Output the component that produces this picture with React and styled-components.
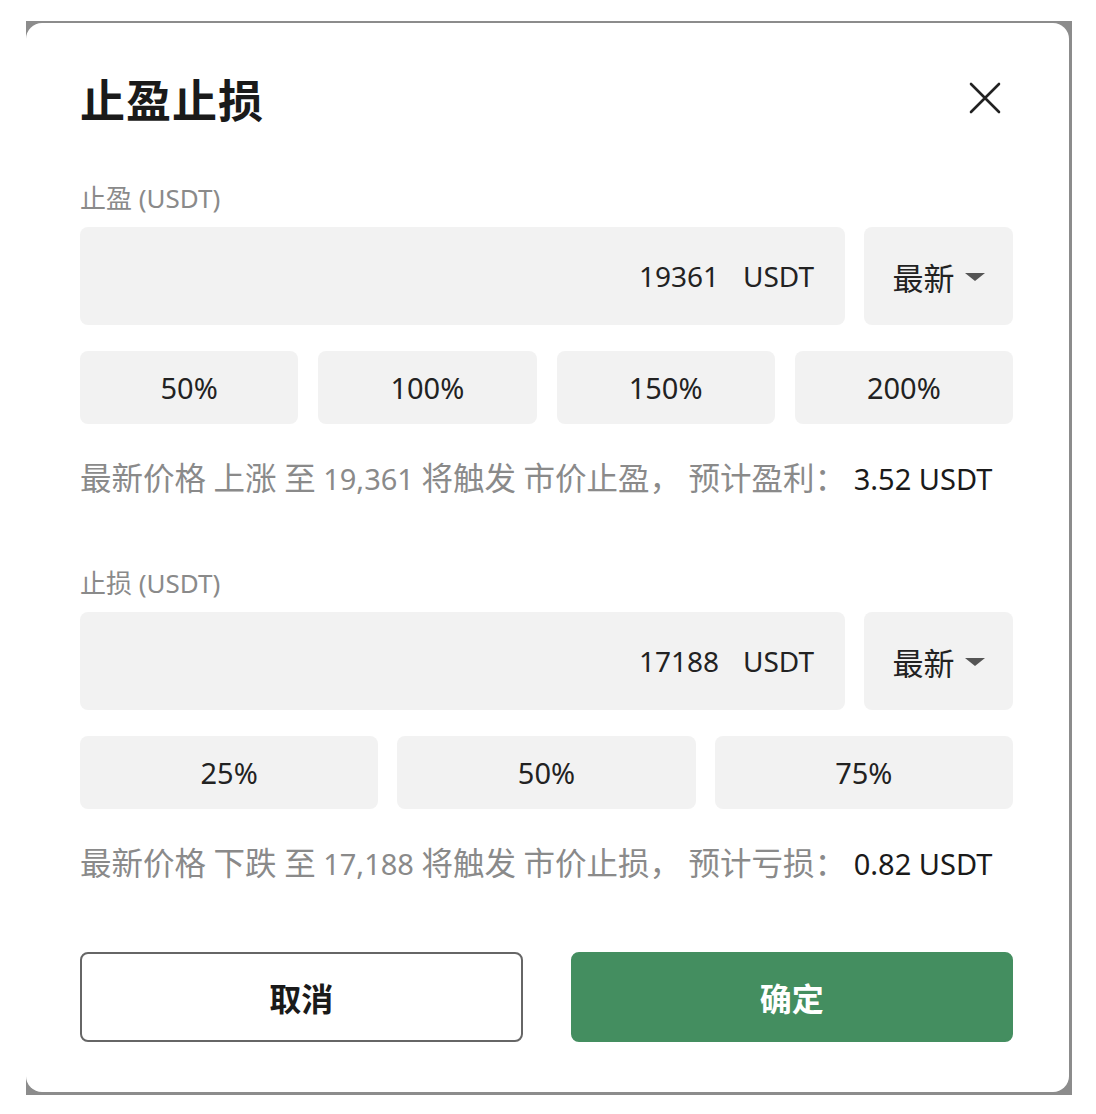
import React from "react";
import styled, { createGlobalStyle } from "styled-components";

const GlobalStyle = createGlobalStyle`
  body {
    margin: 0;
    background: #ffffff;
    font-family: "Noto Sans", "Noto Sans CJK SC", sans-serif;
  }
`;

const Backdrop = styled.div`
  margin: 21px 0 0 26px;
  width: 1046px;
  padding: 2px 3px 3px 0;
  box-sizing: border-box;
  background: #8c8c8c;
`;

const Modal = styled.div`
  background: #ffffff;
  border-radius: 16px;
  padding: 50px 56px 50px 54px;
  display: flex;
  flex-direction: column;
`;

const Header = styled.div`
  height: 50px;
  display: flex;
  align-items: center;
  justify-content: space-between;
  margin-bottom: 60px;
`;

const Title = styled.h1`
  margin: 0;
  font-size: 45px;
  font-weight: 700;
  color: #1a1a1a;
  letter-spacing: 1px;
`;

const CloseButton = styled.button`
  border: 0;
  background: none;
  padding: 0;
  margin-right: 12px;
  width: 32px;
  height: 32px;
  display: flex;
  cursor: pointer;
`;

const Label = styled.div`
  font-size: 26px;
  line-height: 30px;
  color: #8a8a8a;
  margin-bottom: 14px;
`;

const InputRow = styled.div`
  display: flex;
  gap: 19px;
  margin-bottom: 26px;
`;

const PriceField = styled.div`
  flex: 1;
  height: 98px;
  border-radius: 8px;
  background: #f2f2f2;
  display: flex;
  align-items: center;
  justify-content: flex-end;
  padding-right: 31px;
  font-size: 28px;
  color: #222222;
`;

const Unit = styled.span`
  margin-left: 24px;
`;

const Select = styled.div`
  width: 149px;
  height: 98px;
  border-radius: 8px;
  background: #f2f2f2;
  display: flex;
  align-items: center;
  justify-content: center;
  gap: 10px;
  font-size: 31px;
  color: #222222;
`;

const Caret = styled.span`
  width: 0;
  height: 0;
  border-left: 10px solid transparent;
  border-right: 10px solid transparent;
  border-top: 8px solid #555555;
  margin-top: 2px;
`;

const PercentRow = styled.div`
  display: grid;
  grid-template-columns: repeat(${(p) => p.$count}, 1fr);
  gap: ${(p) => p.$gap}px;
  margin-bottom: 35px;
`;

const PercentButton = styled.button`
  height: 73px;
  border: 0;
  border-radius: 8px;
  background: #f2f2f2;
  font-family: inherit;
  font-size: 29px;
  color: #222222;
  cursor: pointer;
`;

const Hint = styled.p`
  margin: 0 0 ${(p) => p.$after}px;
  height: 40px;
  font-size: 29px;
  line-height: 40px;
  color: #8a8a8a;
  white-space: nowrap;
`;

const Zh = styled.span`
  font-size: 31.5px;
  line-height: 1;
`;

const Value = styled.span`
  color: #1a1a1a;
`;

const Actions = styled.div`
  display: grid;
  grid-template-columns: 1fr 1fr;
  gap: 48px;
`;

const ActionButton = styled.button`
  height: 90px;
  border-radius: 8px;
  font-family: inherit;
  font-size: 32px;
  font-weight: 700;
  cursor: pointer;
  border: 2px solid ${(p) => (p.$primary ? "#448e60" : "#666666")};
  background: ${(p) => (p.$primary ? "#448e60" : "#ffffff")};
  color: ${(p) => (p.$primary ? "#ffffff" : "#1a1a1a")};
`;

const CloseIcon = () => (
  <svg width="32" height="32" viewBox="0 0 32 32">
    <path d="M2 2 L30 30 M30 2 L2 30" stroke="#222" strokeWidth="2.6" strokeLinecap="round" />
  </svg>
);

const Section = ({ label, price, percents, gap, direction, target, action, estLabel, est, after }) => (
  <>
    <Label>{label}</Label>
    <InputRow>
      <PriceField>
        {price}
        <Unit>USDT</Unit>
      </PriceField>
      <Select>
        最新
        <Caret />
      </Select>
    </InputRow>
    <PercentRow $count={percents.length} $gap={gap}>
      {percents.map((p) => (
        <PercentButton key={p}>{p}</PercentButton>
      ))}
    </PercentRow>
    <Hint $after={after}>
      <Zh>最新价格</Zh> <Zh>{direction}</Zh> <Zh>至</Zh> {target} <Zh>将触发</Zh>{" "}
      <Zh>市价{action}，</Zh> <Zh>{estLabel}：</Zh> <Value>{est} USDT</Value>
    </Hint>
  </>
);

export default function App() {
  return (
    <>
      <GlobalStyle />
      <Backdrop>
        <Modal>
          <Header>
            <Title>止盈止损</Title>
            <CloseButton aria-label="close">
              <CloseIcon />
            </CloseButton>
          </Header>
          <Section
            label="止盈 (USDT)"
            price="19361"
            percents={["50%", "100%", "150%", "200%"]}
            gap={20}
            direction="上涨"
            target="19,361"
            action="止盈"
            estLabel="预计盈利"
            est="3.52"
            after={69}
          />
          <Section
            label="止损 (USDT)"
            price="17188"
            percents={["25%", "50%", "75%"]}
            gap={19}
            direction="下跌"
            target="17,188"
            action="止损"
            estLabel="预计亏损"
            est="0.82"
            after={68}
          />
          <Actions>
            <ActionButton>取消</ActionButton>
            <ActionButton $primary>确定</ActionButton>
          </Actions>
        </Modal>
      </Backdrop>
    </>
  );
}
